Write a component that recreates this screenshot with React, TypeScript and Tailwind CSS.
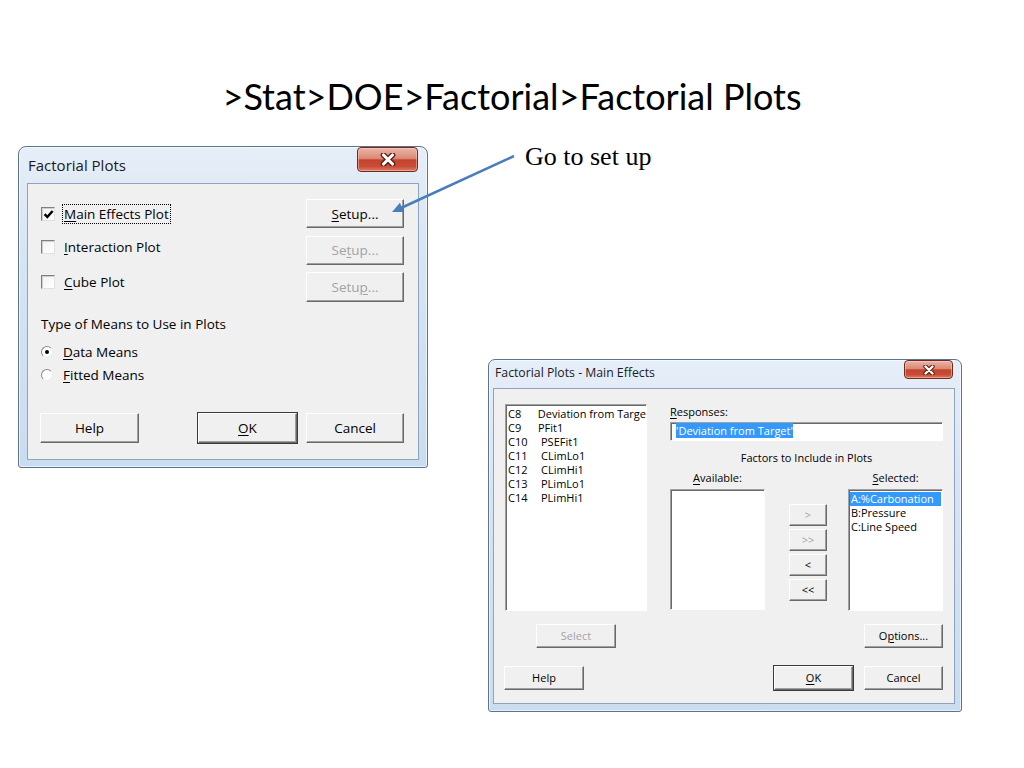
import type { ReactNode } from 'react'

// access-key underline
const U = ({ children }: { children: ReactNode }) => (
  <span className="underline decoration-1 underline-offset-[2px]">{children}</span>
)

function CloseX({ w, h }: { w: number; h: number }) {
  return (
    <svg width={w} height={h} viewBox="0 0 14 10">
      <path d="M3.5 1.5 L10.5 8.5 M10.5 1.5 L3.5 8.5" stroke="#5a1d14" strokeWidth="4.4" strokeLinecap="round" />
      <path d="M3.5 1.5 L10.5 8.5 M10.5 1.5 L3.5 8.5" stroke="#ffffff" strokeWidth="2.4" strokeLinecap="round" />
    </svg>
  )
}

function Btn({ children, className = '', disabled = false, def = false }: {
  children: ReactNode; className?: string; disabled?: boolean; def?: boolean
}) {
  return (
    <div className={`flex items-center justify-center bg-[#f0f0f0] border border-t-white border-l-white border-b-[#696969] border-r-[#696969] ${def ? 'shadow-[inset_-1px_-1px_0_#a0a0a0,0_0_0_1px_#3a3a3a]' : 'shadow-[inset_-1px_-1px_0_#a0a0a0]'} ${disabled ? 'text-[#a3a3a3]' : 'text-black'} ${className}`}>
      {children}
    </div>
  )
}

function Check({ checked }: { checked?: boolean }) {
  return (
    <div className="w-[14px] h-[14px] shrink-0 bg-[linear-gradient(135deg,#f2f2f2,#ffffff)] border border-t-[#7f7f7f] border-l-[#7f7f7f] border-b-[#e0e0e0] border-r-[#e0e0e0] shadow-[inset_1px_1px_0_#cfcfcf] flex items-center justify-center">
      {checked && (
        <svg width="11" height="11" viewBox="0 0 11 11">
          <path d="M1.6 5.2 L4.3 8 L9.6 2" fill="none" stroke="#000" strokeWidth="2.5" />
        </svg>
      )}
    </div>
  )
}

function Radio({ on }: { on?: boolean }) {
  return (
    <div className="w-[12px] h-[12px] shrink-0 rounded-full bg-white border border-t-[#8a8a8a] border-l-[#8a8a8a] border-b-[#ececec] border-r-[#ececec] flex items-center justify-center">
      {on && <div className="w-[4px] h-[4px] rounded-full bg-black" />}
    </div>
  )
}

const frame = 'border border-[#5d7290] bg-[linear-gradient(180deg,#e6eef8_0%,#d6e4f3_35%,#cadcef_100%)] shadow-[inset_0_0_0_1px_rgba(255,255,255,0.6)] flex flex-col'
const closeBtn = 'flex items-center justify-center border border-[#6e2a1f] rounded-[4px] bg-[linear-gradient(180deg,#ebb4a6_0%,#dc8a77_45%,#c4432d_52%,#c84d36_80%,#dd7b60_100%)] shadow-[inset_0_0_0_1px_rgba(255,220,210,0.45)]'
const sunken = 'bg-white border border-t-[#a0a0a0] border-l-[#a0a0a0] border-r-white border-b-white shadow-[inset_1px_1px_0_#696969]'

function FactorialPlots() {
  return (
    <div className={`ml-[18px] w-[410px] h-[322px] rounded-t-[8px] rounded-b-[3px] ${frame}`}>
      <div className="h-[36px] flex items-start justify-between px-[9px]">
        <span className="mt-[8px] text-[15px] leading-[20px] text-[#1b1b1b]">Factorial Plots</span>
        <div className={`w-[61px] h-[25px] ${closeBtn}`}>
          <CloseX w={18} h={13} />
        </div>
      </div>
      <div className="mx-[8px] h-[277px] bg-[#f0f0f0] border border-[#8ea3bd] text-[13.5px] leading-[18px] text-black">
        <div className="flex flex-col gap-[7.5px] pt-[15px] pl-[13px] pr-[14px]">
          <div className="h-[29px] flex items-start">
            <div className="mt-[5px] flex items-center">
              <Check checked />
              <span className="ml-[7px] px-[1px] border border-dotted border-black"><U>M</U>ain Effects Plot</span>
            </div>
            <Btn className="ml-auto w-[98px] h-[29px]"><U>S</U>etup...</Btn>
          </div>
          <div className="h-[29px] flex items-start">
            <div className="mt-[2px] flex items-center">
              <Check />
              <span className="ml-[9px]"><U>I</U>nteraction Plot</span>
            </div>
            <Btn disabled className="ml-auto w-[98px] h-[29px]">Se<U>t</U>up...</Btn>
          </div>
          <div className="h-[29px] flex items-start">
            <div className="mt-[1px] flex items-center">
              <Check />
              <span className="ml-[9px]"><U>C</U>ube Plot</span>
            </div>
            <Btn disabled className="ml-auto w-[98px] h-[30px]">Setu<U>p</U>...</Btn>
          </div>
        </div>
        <div className="mt-[14px] pl-[13px]">Type of Means to Use in Plots</div>
        <div className="mt-[10px] pl-[13px] flex items-center">
          <Radio on />
          <span className="ml-[10px]"><U>D</U>ata Means</span>
        </div>
        <div className="mt-[5px] pl-[13px] flex items-center">
          <Radio />
          <span className="ml-[10px]"><U>F</U>itted Means</span>
        </div>
        <div className="mt-[29px] flex pl-[12px]">
          <Btn className="w-[99px] h-[30px]">Help</Btn>
          <Btn def className="ml-[59px] w-[99px] h-[30px]"><U>O</U>K</Btn>
          <Btn className="ml-[9px] w-[98px] h-[30px]">Cancel</Btn>
        </div>
      </div>
    </div>
  )
}

const COLUMNS: { c: string; name: string; wide?: boolean }[] = [
  { c: 'C8', name: 'Deviation from Targe' },
  { c: 'C9', name: 'PFit1' },
  { c: 'C10', name: 'PSEFit1', wide: true },
  { c: 'C11', name: 'CLimLo1', wide: true },
  { c: 'C12', name: 'CLimHi1', wide: true },
  { c: 'C13', name: 'PLimLo1', wide: true },
  { c: 'C14', name: 'PLimHi1', wide: true },
]

function MainEffects() {
  return (
    <div className={`w-[474px] h-[353px] rounded-t-[7px] rounded-b-[3px] ${frame}`}>
      <div className="h-[28px] flex items-start justify-between pl-[6px] pr-[8px]">
        <span className="mt-[5px] text-[12.25px] leading-[16px] text-[#1b1b1b]">Factorial Plots - Main Effects</span>
        <div className={`w-[49px] h-[19px] ${closeBtn}`}>
          <CloseX w={14} h={10} />
        </div>
      </div>
      <div className="ml-[4px] mr-[6px] h-[316px] bg-[#f0f0f0] border border-[#8ea3bd] text-[11px] leading-[14px] text-black">
        <div className="flex pt-[15px] pl-[11px]">
          <div className={`w-[142px] h-[207px] pt-[2px] pl-[2px] overflow-hidden ${sunken}`}>
            {COLUMNS.map(r => (
              <div key={r.c} className="flex whitespace-nowrap h-[14px]">
                <span className={r.wide ? 'w-[33px]' : 'w-[30px]'}>{r.c}</span>
                <span>{r.name}</span>
              </div>
            ))}
          </div>
          <div className="ml-[23px] w-[273px] flex flex-col">
            <div className="leading-[16px]"><U>R</U>esponses:</div>
            <div className={`mt-[2px] h-[19px] pl-[5px] pt-[1px] ${sunken}`}>
              <span className="bg-[#3399ff] text-white">'Deviation from Target'</span>
            </div>
            <div className="mt-[9px] leading-[16px] text-center">Factors to Include in Plots</div>
            <div className="mt-[4px] flex leading-[16px]">
              <div className="w-[95px] text-center"><U>A</U>vailable:</div>
              <div className="ml-auto w-[95px] text-center"><U>S</U>elected:</div>
            </div>
            <div className="mt-[3px] flex">
              <div className={`w-[95px] h-[121px] ${sunken}`} />
              <div className="ml-[24px] w-[38px] flex flex-col gap-[3px] pt-[15px]">
                <Btn disabled className="h-[22px]">&gt;</Btn>
                <Btn disabled className="h-[22px]">&gt;&gt;</Btn>
                <Btn className="h-[22px]">&lt;</Btn>
                <Btn className="h-[22px]">&lt;&lt;</Btn>
              </div>
              <div className={`ml-auto w-[95px] h-[122px] pt-[2px] ${sunken}`}>
                <div className="mx-[1px] pl-[1px] h-[14px] bg-[#3399ff] text-white">A:%Carbonation</div>
                <div className="pl-[2px] h-[14px]">B:Pressure</div>
                <div className="pl-[2px] h-[14px]">C:Line Speed</div>
              </div>
            </div>
          </div>
        </div>
        <div className="mt-[13px] flex pl-[42px] pr-[11px]">
          <Btn disabled className="w-[80px] h-[24px]">Select</Btn>
          <Btn className="ml-auto w-[79px] h-[24px]">O<U>p</U>tions...</Btn>
        </div>
        <div className="mt-[18px] flex pl-[10px] pr-[11px]">
          <Btn className="w-[80px] h-[24px]">Help</Btn>
          <Btn def className="ml-auto w-[79px] h-[24px]"><U>O</U>K</Btn>
          <Btn className="ml-[11px] w-[79px] h-[24px]">Cancel</Btn>
        </div>
      </div>
    </div>
  )
}

export default function App() {
  return (
    <div className="relative w-[1024px] h-[768px] overflow-hidden bg-white font-['Open_Sans',sans-serif]">
      <h1 className="h-[146px] pt-[74px] text-center font-['Lato',sans-serif] text-[36px] leading-[44px] text-black">
        &gt;Stat&gt;DOE&gt;Factorial&gt;Factorial Plots
      </h1>
      <div className="flex items-start">
        <FactorialPlots />
        <div className="ml-[60px] flex flex-col">
          <p className="-mt-[3px] pl-[37px] font-['Liberation_Serif',serif] text-[26px] leading-[28px] text-black">Go to set up</p>
          <div className="mt-[188px]">
            <MainEffects />
          </div>
        </div>
      </div>

      {/* callout arrow */}
      <svg className="absolute inset-0 pointer-events-none" width="1024" height="768">
        <line x1="514" y1="156" x2="401" y2="208" stroke="#4a7ebb" strokeWidth="2.5" />
        <polygon points="392,212 404.1,211.9 399.9,202.8" fill="#4a7ebb" />
      </svg>
    </div>
  )
}
